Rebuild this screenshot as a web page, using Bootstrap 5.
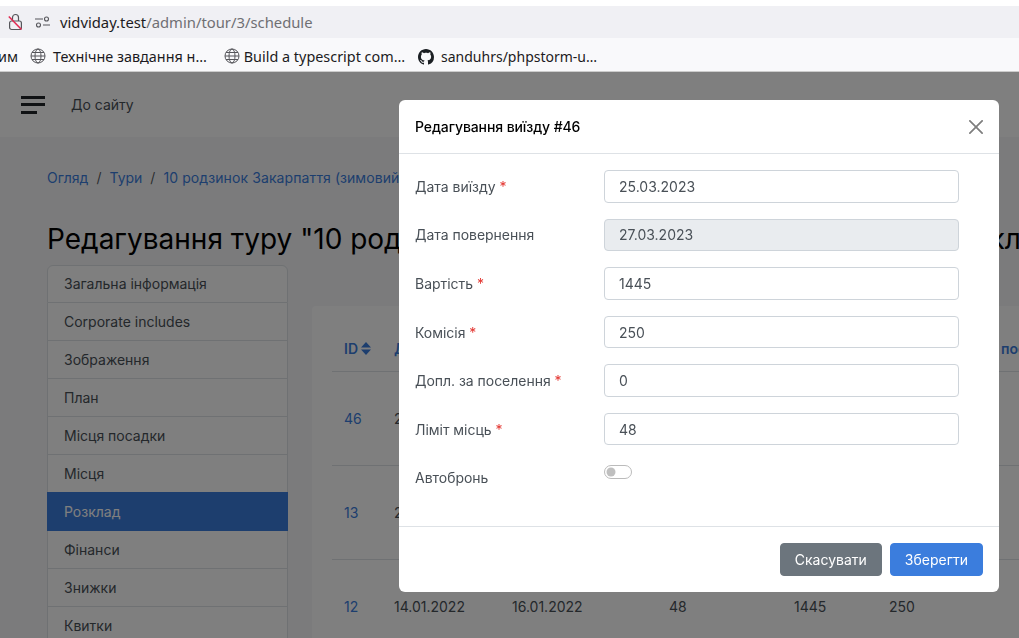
<!DOCTYPE html>
<html lang="uk">
<head>
<meta charset="utf-8">
<title>Розклад</title>
<link href="https://cdn.jsdelivr.net/npm/bootstrap@5.3.0/dist/css/bootstrap.min.css" rel="stylesheet">
<style>
html,body{height:638px;overflow:hidden}
body{background:#f6f7f9;font-family:Inter,"Liberation Sans",sans-serif;font-size:14px;color:#495057}
.chrome{height:72px;background:#fff;padding-top:6px;font-family:"Noto Sans","Open Sans",sans-serif;color:#1c1b22}
.urlbar{height:32px;background:#f0f0f4;padding-left:8px;font-size:14.8px}
.urlbar .host{margin-left:10px}
.urlbar .rest{color:#6f6f73}
.bookbar{height:34px;background:#f9f9fb;border-bottom:1px solid #ccc;font-size:14.4px;white-space:nowrap;overflow:hidden;padding-top:4px}
.bm{display:flex;align-items:center;gap:7px}
.topnav{height:65px;background:#fff;padding-left:21px}
.topnav a{margin-left:26px;color:#495057;text-decoration:none}
.burger{width:24px;display:flex;flex-direction:column;gap:4.5px}
.burger i{display:block;height:3px;background:#212529}
.burger i:last-child{width:16px}
.pagewrap{padding:30px 0 0 47px;width:1300px}
.crumbs{--bs-breadcrumb-margin-bottom:0;--bs-breadcrumb-item-padding-x:8px;margin:0;height:21px;line-height:21px}
.crumbs a{text-decoration:none;color:#3b7ddd}
.crumbs .active a{letter-spacing:.1px}
.pagetitle{font-size:28px;font-weight:400;line-height:36px;margin:33px 0 8px;color:#000;white-space:nowrap;height:36px}
.sidelist{width:241px;flex:none;--bs-list-group-border-color:#dee2e6}
.sidelist .list-group-item{height:38px;padding:9px 16px;line-height:20px;color:#495057;background:#fff}
.sidelist .list-group-item:first-child{padding-top:8px}
.sidelist .list-group-item.active{background:#3b7ddd;border-color:#3b7ddd;color:#fff;height:39px;padding-top:9px}
.tcard{margin:41px 0 0 24px;width:900px;background:#fff;border-radius:4px;padding:20px 20px 0 20px;height:500px}
.sched{width:860px;table-layout:fixed;margin:0;--bs-table-bg:transparent}
.sched th{height:45px;padding:0 12px;vertical-align:middle;font-weight:600;color:#3b7ddd;white-space:nowrap;overflow:hidden;border-color:#dee2e6}
.sched td{height:94px;padding:0 12px;vertical-align:middle;color:#495057;border-color:#dee2e6;font-weight:400}
.sched a{color:#3b7ddd;text-decoration:none}
.sortic{margin-left:3px;vertical-align:-1px}
.shade{position:absolute;left:0;right:0;top:72px;bottom:0;background:rgba(0,0,0,.5);z-index:1050}
.modal.editbox{overflow:hidden;--bs-modal-border-radius:6px}
.modal.editbox .modal-dialog{width:600px;max-width:none;margin:100px 0 0 399px}
.modal.editbox .modal-content{border:0;height:492px;border-radius:6px}
.modal.editbox .modal-header{height:54px;padding:0 16px;border-color:#dee2e6}
.modal.editbox .modal-title{font-size:14px;line-height:21px;color:#000;letter-spacing:-.1px}
.modal.editbox .modal-body{padding:16.3px 16px 0;height:372px;flex:none}
.modal.editbox .modal-footer{padding:16px;height:66px;border-color:#dee2e6;gap:8px;flex-wrap:nowrap}
.modal.editbox .modal-footer>*{margin:0}
.frow{display:flex;align-items:center;height:32.5px;margin-bottom:16px}
.frow.lowrow{height:32px;margin-bottom:16.5px}
.frow label{width:189px;flex:none;margin:0;color:#495057;letter-spacing:-.03px}
.frow label b{color:#e3342f;font-weight:400}
.frow .form-control{width:355px;flex:none;height:32.5px;min-height:0;padding:5px 14px;font-size:14px;line-height:21px;color:#495057;border-color:#ced4da;border-radius:4px}
.frow.lowrow .form-control{height:32px}
.frow .form-control:disabled{background:#e9ecef}
.frow.swrow{align-items:flex-start;height:32px;padding-top:3px}
.frow.swrow label{margin-top:3px}
.frow .form-switch{padding:0;margin:1px 0 0;min-height:0;height:14px;line-height:14px}
.frow .form-switch .form-check-input{width:28px;height:14px;margin:0;float:none;display:block;border-color:#bbb}
.editbox .btn{height:33px;padding:0 14px;font-size:14px;line-height:31px;border-radius:4px}
.editbox .btn-primary{background:#3b7ddd;border-color:#3b7ddd}
.editbox .btn-secondary{background:#6c757d;border-color:#6c757d}
</style>
</head>
<body>
<div class="chrome">
  <div class="urlbar d-flex align-items-center">
    <svg width="15" height="18" viewBox="0 0 15 18" fill="none"><path d="M4.5 8V4.5a3 3 0 0 1 6 0V8" stroke="#55555a" stroke-width="1.2"/><rect x="1.6" y="8" width="11.8" height="8.5" rx="2" stroke="#55555a" stroke-width="1.2"/><path d="M.8 3.5 13.5 16.5" stroke="#e22850" stroke-width="1.5"/></svg>
    <svg style="margin-left:12px" width="15" height="12" viewBox="0 0 15 12" fill="none" stroke="#55555a" stroke-width="1.1"><path d="M0 3h8M8 9h7"/><circle cx="11.5" cy="3" r="2"/><circle cx="3.5" cy="9" r="2"/></svg>
    <span class="host">vidviday.test<span class="rest">/admin/tour/3/schedule</span></span>
  </div>
  <div class="bookbar d-flex align-items-center">
    <span style="margin-left:-2px">им</span>
    <span class="bm" style="margin-left:12px"><svg width="16" height="16" viewBox="0 0 16 16" fill="none" stroke="#55555a" stroke-width="1"><circle cx="8" cy="8" r="7"/><ellipse cx="8" cy="8" rx="3" ry="7"/><path d="M1 8h14M2 4.5h12M2 11.5h12"/></svg>Технічне завдання н…</span>
    <span class="bm" style="margin-left:17px;gap:4px"><svg width="16" height="16" viewBox="0 0 16 16" fill="none" stroke="#55555a" stroke-width="1"><circle cx="8" cy="8" r="7"/><ellipse cx="8" cy="8" rx="3" ry="7"/><path d="M1 8h14M2 4.5h12M2 11.5h12"/></svg>Build a typescript com…</span>
    <span class="bm" style="margin-left:13px;font-size:14px"><svg width="16" height="16" viewBox="0 0 16 16" fill="#1b1f23"><path d="M8 0C3.58 0 0 3.58 0 8c0 3.54 2.29 6.53 5.47 7.59.4.07.55-.17.55-.38 0-.19-.01-.82-.01-1.49-2.01.37-2.53-.49-2.69-.94-.09-.23-.48-.94-.82-1.13-.28-.15-.68-.52-.01-.53.63-.01 1.08.58 1.23.82.72 1.21 1.87.87 2.33.66.07-.52.28-.87.51-1.07-1.78-.2-3.64-.89-3.64-3.95 0-.87.31-1.59.82-2.15-.08-.2-.36-1.02.08-2.12 0 0 .67-.21 2.2.82.64-.18 1.32-.27 2-.27s1.36.09 2 .27c1.53-1.04 2.2-.82 2.2-.82.44 1.1.16 1.92.08 2.12.51.56.82 1.27.82 2.15 0 3.07-1.87 3.75-3.65 3.95.29.25.54.73.54 1.48 0 1.07-.01 1.93-.01 2.2 0 .21.15.46.55.38A8.01 8.01 0 0 0 16 8c0-4.42-3.58-8-8-8z"/></svg>sanduhrs/phpstorm-u…</span>
  </div>
</div>
<div class="topnav d-flex align-items-center">
  <span class="burger"><i></i><i></i><i></i></span>
  <a href="#">До сайту</a>
</div>
<div class="pagewrap">
  <ol class="breadcrumb crumbs">
    <li class="breadcrumb-item"><a href="#">Огляд</a></li>
    <li class="breadcrumb-item"><a href="#">Тури</a></li>
    <li class="breadcrumb-item active"><a href="#">10 родзинок Закарпаття (зимовий)</a></li>
  </ol>
  <h1 class="pagetitle">Редагування туру "10 родзинок Закарпаття (зимовий 2023 р.)" - Розклад</h1>
  <div class="d-flex">
    <div class="list-group sidelist">
      <a href="#" class="list-group-item">Загальна інформація</a>
      <a href="#" class="list-group-item">Corporate includes</a>
      <a href="#" class="list-group-item">Зображення</a>
      <a href="#" class="list-group-item">План</a>
      <a href="#" class="list-group-item">Місця посадки</a>
      <a href="#" class="list-group-item">Місця</a>
      <a href="#" class="list-group-item active">Розклад</a>
      <a href="#" class="list-group-item">Фінанси</a>
      <a href="#" class="list-group-item">Знижки</a>
      <a href="#" class="list-group-item">Квитки</a>
    </div>
    <div class="tcard">
      <table class="table sched">
        <colgroup><col style="width:50px"><col style="width:118px"><col style="width:157px"><col style="width:125px"><col style="width:95px"><col style="width:112px"><col style="width:203px"></colgroup>
        <thead><tr>
          <th>ID<svg class="sortic" width="10" height="13" viewBox="0 0 10 13" fill="#3b7ddd"><path d="M5 0 10 5.6H0zM5 13 0 7.4h10z"/></svg></th>
          <th>Дата виїзду</th><th>Дата повернення</th><th>Ліміт місць</th><th>Вартість</th><th>Комісія</th><th>поселення</th>
        </tr></thead>
        <tbody>
          <tr><td><a href="#">46</a></td><td>25.03.2023</td><td>27.03.2023</td><td>48</td><td>1445</td><td>250</td><td></td></tr>
          <tr><td><a href="#">13</a></td><td>21.01.2022</td><td>23.01.2022</td><td>48</td><td>1445</td><td>250</td><td></td></tr>
          <tr><td><a href="#">12</a></td><td>14.01.2022</td><td>16.01.2022</td><td>48</td><td>1445</td><td>250</td><td></td></tr>
        </tbody>
      </table>
    </div>
  </div>
</div>
<div class="shade"></div>
<div class="modal d-block editbox" tabindex="-1">
  <div class="modal-dialog">
    <div class="modal-content">
      <div class="modal-header">
        <h5 class="modal-title">Редагування виїзду #46</h5>
        <button type="button" class="btn-close" aria-label="Close"></button>
      </div>
      <div class="modal-body">
        <div class="frow"><label>Дата виїзду <b>*</b></label><input class="form-control" value="25.03.2023"></div>
        <div class="frow lowrow"><label>Дата повернення</label><input class="form-control" value="27.03.2023" disabled></div>
        <div class="frow"><label>Вартість <b>*</b></label><input class="form-control" value="1445"></div>
        <div class="frow"><label>Комісія <b>*</b></label><input class="form-control" value="250"></div>
        <div class="frow"><label>Допл. за поселення <b>*</b></label><input class="form-control" value="0"></div>
        <div class="frow"><label>Ліміт місць <b>*</b></label><input class="form-control" value="48"></div>
        <div class="frow swrow"><label>Автобронь</label><div class="form-check form-switch"><input class="form-check-input" type="checkbox" role="switch"></div></div>
      </div>
      <div class="modal-footer">
        <button type="button" class="btn btn-secondary">Скасувати</button>
        <button type="button" class="btn btn-primary">Зберегти</button>
      </div>
    </div>
  </div>
</div>
</body>
</html>
